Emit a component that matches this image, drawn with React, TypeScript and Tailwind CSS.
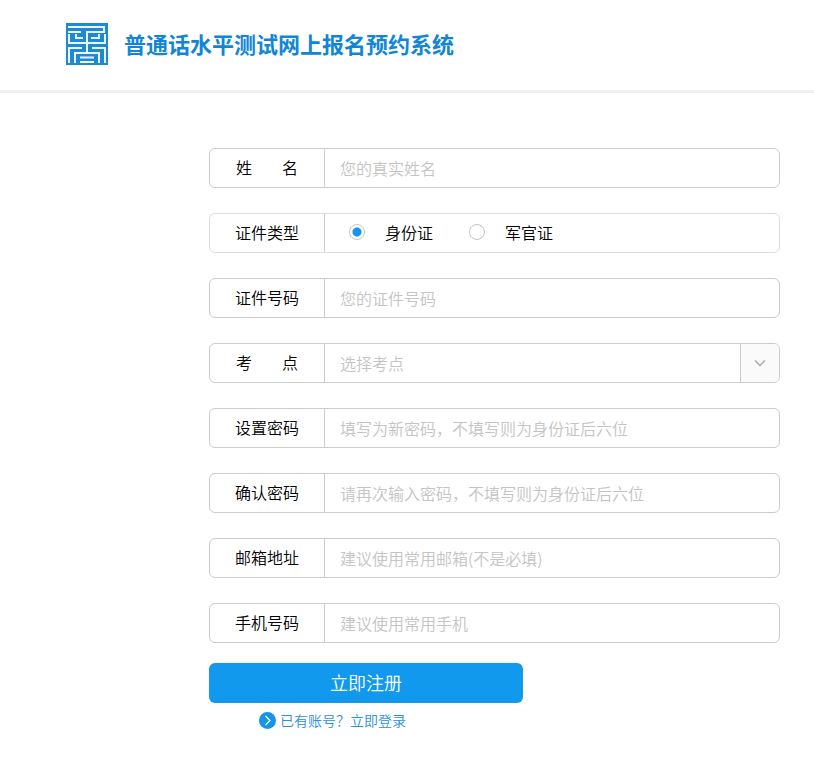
import { useState, type ReactNode } from "react";

function Logo() {
  return (
    <svg viewBox="0 0 42 42" className="size-[42px] shrink-0" aria-hidden="true">
      <rect width="42" height="42" fill="#1f8ad4" />
      <g fill="none" stroke="#eaf6fd" strokeWidth="2">
        <path d="M2 4H38V9H21V30" />
        <path d="M2 9H15" />
        <path d="M3 11V20H39V11" />
        <path d="M10 11V15H17" />
        <path d="M25 15H33V11" />
        <path d="M3 40V25H16" />
        <path d="M26 25H39V40" />
        <path d="M9 40V30H33V40" />
        <path d="M14 34.5H28" />
        <path d="M14 39H28" />
      </g>
    </svg>
  );
}

type FieldProps = {
  id: string;
  label: string;
  soft?: boolean;
  children: ReactNode;
};

function Field({ id, label, soft, children }: FieldProps) {
  const spread = label.includes(" ");
  return (
    <div
      className={`flex h-10 overflow-hidden rounded-md border ${soft ? "border-[#dddddd]" : "border-[#cccccc]"}`}
    >
      <label
        id={`${id}-label`}
        htmlFor={soft ? undefined : id}
        className="flex w-[115px] shrink-0 items-center justify-center border-r border-[#cccccc] pb-0.5 text-black"
      >
        <span className={spread ? "w-[62px] [text-align-last:justify]" : ""}>{label}</span>
      </label>
      {children}
    </div>
  );
}

type TextFieldProps = { id: string; label: string; placeholder: string; type?: string };

function TextField({ id, label, placeholder, type = "text" }: TextFieldProps) {
  return (
    <Field id={id} label={label}>
      <input
        id={id}
        type={type}
        placeholder={placeholder}
        className="min-w-0 flex-1 px-[15px] text-black outline-none placeholder:text-[#c4c4c4]"
      />
    </Field>
  );
}

const idTypes = ["身份证", "军官证"];

export default function App() {
  const [idType, setIdType] = useState(idTypes[0]);

  return (
    <div className="bg-white pb-7 font-['Noto_Sans_CJK_SC',sans-serif] text-base font-[350]">
      <header className="flex h-[93px] items-center gap-4 border-b-3 border-[#f0f0f0] pr-4 pb-0.5 pl-[66px]">
        <Logo />
        <h1 className="pb-0.5 text-[22px] font-bold text-[#1286d6]">普通话水平测试网上报名预约系统</h1>
      </header>

      <form className="mt-[55px] mr-[34px] ml-[209px]" onSubmit={(e) => e.preventDefault()}>
        <div className="flex flex-col gap-[25px]">
          <TextField id="name" label="姓 名" placeholder="您的真实姓名" />
          <Field id="id-type" label="证件类型" soft>
            <div
              role="radiogroup"
              aria-labelledby="id-type-label"
              className="flex items-center gap-9 px-6 pb-0.5"
            >
              {idTypes.map((t) => (
                <label key={t} className="flex items-center gap-5 text-black">
                  <input
                    type="radio"
                    name="idType"
                    checked={idType === t}
                    onChange={() => setIdType(t)}
                    className="size-4 appearance-none rounded-full border border-[#c4c4c4] checked:bg-[radial-gradient(circle,#1296ee_4px,#ffffff_5px)]"
                  />
                  {t}
                </label>
              ))}
            </div>
          </Field>
          <TextField id="id-number" label="证件号码" placeholder="您的证件号码" />
          <Field id="site" label="考 点">
            <div className="grid min-w-0 flex-1 grid-cols-[1fr_39px]">
              <select
                id="site"
                defaultValue=""
                className="col-span-2 col-start-1 row-start-1 appearance-none bg-transparent pr-12 pl-[15px] text-[#c4c4c4] outline-none"
              >
                <option value="">选择考点</option>
              </select>
              <span className="pointer-events-none col-start-2 row-start-1 flex items-center justify-center border-l border-[#cccccc] bg-[#fafafa]">
                <svg viewBox="0 0 12 8" className="h-2 w-3" fill="none" stroke="#aaaaaa" strokeWidth="1.5" aria-hidden="true">
                  <path d="M1 1.5L6 6.5L11 1.5" />
                </svg>
              </span>
            </div>
          </Field>
          <TextField id="password" type="password" label="设置密码" placeholder="填写为新密码，不填写则为身份证后六位" />
          <TextField id="confirm" type="password" label="确认密码" placeholder="请再次输入密码，不填写则为身份证后六位" />
          <TextField id="email" type="email" label="邮箱地址" placeholder="建议使用常用邮箱(不是必填)" />
          <TextField id="phone" type="tel" label="手机号码" placeholder="建议使用常用手机" />
        </div>

        <button type="submit" className="mt-5 h-10 w-full max-w-[314px] rounded-md bg-[#1199ee] pb-0.5 text-lg text-white">
          立即注册
        </button>
        <div className="mt-[7px] flex pl-[50px]">
          <a href="#login" className="flex items-center gap-1 text-sm text-[#2a8fe0]">
            <svg viewBox="0 0 17 17" className="size-[17px]" fill="none" aria-hidden="true">
              <circle cx="8.5" cy="8.5" r="8.5" fill="#1594ea" />
              <path d="M6.5 4L11 8.5L6.5 13" stroke="#ffffff" strokeWidth="1.2" />
            </svg>
            已有账号？立即登录
          </a>
        </div>
      </form>
    </div>
  );
}
